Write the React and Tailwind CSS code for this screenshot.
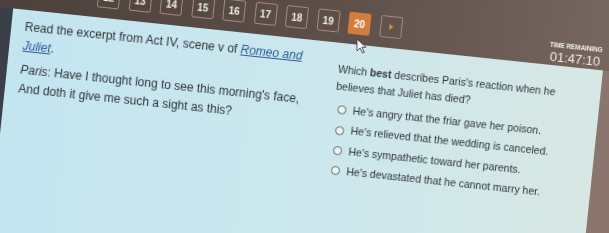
import React from "react";

const font = { fontFamily: '"Liberation Sans", Arial, sans-serif' };

function Box({ n }) {
  return (
    <div className="w-[22px] h-[22px] border border-[#a8897a] rounded-[2px] flex items-center justify-center text-[10px] font-bold text-[#f2ece8]">
      {n}
    </div>
  );
}

function Radio({ children }) {
  return (
    <div className="h-[20.4px] flex items-center">
      <div className="ml-[3px] w-[9px] h-[9px] rounded-full border-[1.5px] border-[#5d6366] bg-[#eef6f6] shrink-0" />
      <span className="ml-[7px] text-[10.5px] text-[#2e3438] whitespace-nowrap">{children}</span>
    </div>
  );
}

export default function App() {
  return (
    <div className="relative w-[609px] h-[233px] overflow-hidden bg-[#3b3f47]" style={font}>
      <div className="-ml-[40px] -mt-[80px] w-[720px] h-[380px] origin-[40px_80px] rotate-[6deg] flex flex-col blur-[0.4px]">
        {/* top bar */}
        <div className="h-[87px] flex items-start bg-gradient-to-r from-[#4a3f3b] via-[#5c4e48] to-[#7c6c64]">
          <div className="mt-[55px] ml-[137px] flex gap-[9.5px]">
            {[12, 13, 14, 15, 16, 17, 18, 19].map((n) => (
              <Box key={n} n={n} />
            ))}
            <div className="w-[22px] h-[22px] rounded-[2px] bg-[#d47c3c] flex items-center justify-center text-[10px] font-bold text-white">
              20
            </div>
            <div className="w-[22px] h-[22px] border border-[#a8897a] rounded-[2px] flex items-center justify-center">
              <div className="w-0 h-0 border-y-[3px] border-y-transparent border-l-[4px] border-l-[#d9953f]" />
            </div>
          </div>
          <div className="mt-[63px] ml-auto mr-[71px] w-[62px] flex flex-col items-center text-[#f1eeee]">
            <div className="text-[6.5px] leading-[8px] font-bold tracking-[-0.1px] whitespace-nowrap">TIME REMAINING</div>
            <div className="text-[13px] leading-[14px] mt-[1px] whitespace-nowrap">01:47:10</div>
          </div>
        </div>
        {/* content row */}
        <div className="flex-1 flex">
          <div className="w-[53.5px] bg-[#3b3f47]" />
          <div className="w-[593.5px] bg-gradient-to-r from-[#c3e5f0] via-[#cbe7ee] to-[#d7e7e3] flex gap-[21px] pl-[14px]">
            <div className="w-[295px] pt-[8px] text-[12px] leading-[19px] text-[#2f3438]">
              <p>
                Read the excerpt from Act IV, scene v of{" "}
                <span className="italic underline text-[#2c5a98]">Romeo and Juliet</span>.
              </p>
              <p className="mt-[5.4px]">
                <span className="italic">Paris</span>: Have I thought long to see this morning's face,
                <br />
                And doth it give me such a sight as this?
              </p>
            </div>
            <div className="w-[225px] pt-[17.5px]">
              <p className="text-[10.5px] leading-[17.5px] text-[#2e3438]">
                Which <span className="font-bold">best</span> describes Paris's reaction when he believes that Juliet has died?
              </p>
              <div className="mt-[4px] flex flex-col">
                <Radio>He's angry that the friar gave her poison.</Radio>
                <Radio>He's relieved that the wedding is canceled.</Radio>
                <Radio>He's sympathetic toward her parents.</Radio>
                <Radio>He's devastated that he cannot marry her.</Radio>
              </div>
            </div>
          </div>
          <div className="flex-1 bg-[#8a766e]" />
        </div>
      </div>
      {/* mouse cursor overlay */}
      <svg className="absolute left-[356px] top-[38px]" width="11" height="16" viewBox="0 0 11 16">
        <path d="M1 1 L1 13 L4 10 L6.5 15 L8.3 14.2 L5.8 9.3 L10 9.3 Z" fill="#f4f4f4" stroke="#333" strokeWidth="0.8" strokeLinejoin="round" />
      </svg>
    </div>
  );
}
